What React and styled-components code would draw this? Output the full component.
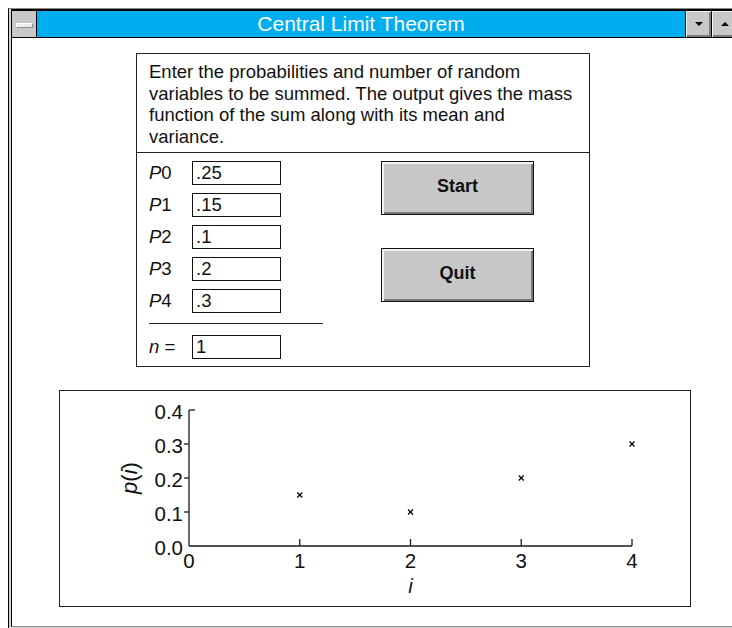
import React from "react";
import styled, { createGlobalStyle } from "styled-components";

const GlobalStyle = createGlobalStyle`
  html, body {
    margin: 0;
    padding: 0;
    background: #fff;
    overflow: hidden;
  }
  body {
    font-family: "Liberation Sans", Arial, sans-serif;
    color: #111;
  }
`;

const probs = [".25", ".15", ".1", ".2", ".3"];
const points = [[1, 0.15], [2, 0.1], [3, 0.2], [4, 0.3]];

// chart geometry (svg coords)
const X0 = 129;
const Y0 = 155;
const XS = 110.75;
const YS = 340;
const px = (i) => X0 + i * XS;
const py = (p) => Y0 - p * YS;

const App = () => {
  return (
    <Page>
      <GlobalStyle />
      <Frame>
        <Inner>
          <TitleBar>
            <SysMenu>
              <SysBar />
            </SysMenu>
            <Caption>Central Limit Theorem</Caption>
            <ArrowBtn>
              <Arrow down />
            </ArrowBtn>
            <ArrowBtn>
              <Arrow />
            </ArrowBtn>
          </TitleBar>

          <Panel>
            <Description>
              Enter the probabilities and number of random
              <br />
              variables to be summed. The output gives the mass
              <br />
              function of the sum along with its mean and
              <br />
              variance.
            </Description>

            <Lower>
              <Fields>
                {probs.map((v, i) => (
                  <Row key={i}>
                    <Label>
                      <em>P</em>
                      {i}
                    </Label>
                    <Field>{v}</Field>
                  </Row>
                ))}
                <Divider />
                <Row>
                  <Label>
                    <em>n</em> =
                  </Label>
                  <Field>1</Field>
                </Row>
              </Fields>

              <Buttons>
                <Button>Start</Button>
                <Button>Quit</Button>
              </Buttons>
            </Lower>
          </Panel>

          <ChartBox>
            <svg width="630" height="215">
              <g stroke="#1a1a1a" strokeWidth="1.3" fill="none">
                <line x1={X0} y1={py(0.4)} x2={X0} y2={Y0} />
                <line x1={X0} y1={Y0} x2={px(4)} y2={Y0} />
                <line x1={X0} y1={py(0.4)} x2={X0 + 6} y2={py(0.4)} />
                {[0.1, 0.2, 0.3].map((t) => (
                  <line key={t} x1={X0 - 5} y1={py(t)} x2={X0} y2={py(t)} />
                ))}
                {[1, 2, 3, 4].map((t) => (
                  <line key={t} x1={px(t)} y1={Y0} x2={px(t)} y2={Y0 - 7} />
                ))}
              </g>

              <g fontFamily="Liberation Sans, Arial, sans-serif" fontSize="20.5" fill="#111">
                {[0, 0.1, 0.2, 0.3, 0.4].map((t) => (
                  <text key={t} x={X0 - 6} y={py(t) + 1} textAnchor="end" dominantBaseline="central">
                    {t.toFixed(1)}
                  </text>
                ))}
                {[0, 1, 2, 3, 4].map((t) => (
                  <text key={t} x={px(t)} y={177} textAnchor="middle">
                    {t}
                  </text>
                ))}
                <text x={px(2)} y={202} textAnchor="middle" fontStyle="italic">
                  i
                </text>
                <text
                  x={69}
                  y={87}
                  textAnchor="middle"
                  dominantBaseline="central"
                  transform="rotate(-90 69 87)"
                  fontSize="22"
                >
                  <tspan fontStyle="italic">p</tspan>(<tspan fontStyle="italic">i</tspan>)
                </text>
              </g>

              <g stroke="#000" strokeWidth="1.3">
                {points.map(([i, p]) => (
                  <g key={i}>
                    <line x1={px(i) - 2.5} y1={py(p) - 2.5} x2={px(i) + 2.5} y2={py(p) + 2.5} />
                    <line x1={px(i) - 2.5} y1={py(p) + 2.5} x2={px(i) + 2.5} y2={py(p) - 2.5} />
                  </g>
                ))}
              </g>
            </svg>
          </ChartBox>
        </Inner>
      </Frame>
    </Page>
  );
};

const Page = styled.div`
  width: 732px;
  height: 628px;
  padding: 8px 0 0 8px;
  box-sizing: border-box;
  overflow: hidden;
`;

const Frame = styled.div`
  width: 729px;
  height: 620px;
  box-sizing: border-box;
  border-top: 1px solid #8a8a8a;
  border-left: 1px solid #000;
  padding-left: 2px;
  background: #d4d4d4;
`;

const Inner = styled.div`
  height: 618px;
  box-sizing: border-box;
  background: #fff;
  border-left: 1px solid #000;
  border-top: 2px solid #000;
  border-bottom: 1px solid #8a8a8a;
  display: flex;
  flex-direction: column;
`;

const TitleBar = styled.div`
  display: flex;
  height: 27px;
  box-sizing: border-box;
  border-bottom: 1px solid #000;
`;

const SysMenu = styled.div`
  width: 25px;
  box-sizing: border-box;
  border-right: 1px solid #000;
  background: #c8c8c8;
  display: flex;
  align-items: center;
  justify-content: center;
`;

const SysBar = styled.span`
  width: 17px;
  height: 5px;
  box-sizing: border-box;
  background: #ececec;
  border: 1px solid #8c8c8c;
  border-top-color: #fff;
  border-left-color: #fff;
  margin-top: 2px;
`;

const Caption = styled.div`
  flex: 1;
  background: #00adef;
  color: #fff;
  font-size: 21px;
  line-height: 26px;
  text-align: center;
`;

const ArrowBtn = styled.div`
  width: 26px;
  box-sizing: border-box;
  background: #c8c8c8;
  border-left: 1px solid #000;
  box-shadow: inset 1px 1px 0 #f2f2f2, inset -2px -2px 0 #7c7c7c;
  display: flex;
  align-items: center;
  justify-content: center;
`;

const Arrow = styled.span`
  width: 0;
  height: 0;
  border-left: 4px solid transparent;
  border-right: 4px solid transparent;
  ${(p) => (p.down ? "border-top: 4px solid #000;" : "border-bottom: 4px solid #000;")}
`;

const Panel = styled.div`
  margin: 15px 0 0 124px;
  width: 454px;
  height: 314px;
  box-sizing: border-box;
  border: 1px solid #222;
`;

const Description = styled.div`
  padding: 7px 12px 5px;
  font-size: 18.5px;
  line-height: 21.5px;
  white-space: nowrap;
  border-bottom: 1px solid #222;
`;

const Lower = styled.div`
  display: flex;
  gap: 58px;
  padding: 8px 12px 0;
`;

const Fields = styled.div`
  width: 174px;
  display: flex;
  flex-direction: column;
  gap: 8px;
`;

const Row = styled.div`
  display: flex;
  align-items: center;
  height: 24px;
`;

const Label = styled.div`
  width: 43px;
  font-size: 18.5px;
`;

const Field = styled.div`
  width: 89px;
  height: 24px;
  box-sizing: border-box;
  border: 1px solid #111;
  padding-left: 3px;
  font-size: 18.5px;
  line-height: 22px;
`;

const Divider = styled.div`
  height: 1px;
  background: #222;
  margin: 2px 0 3px;
`;

const Buttons = styled.div`
  display: flex;
  flex-direction: column;
  gap: 33px;
`;

const Button = styled.div`
  width: 153px;
  height: 54px;
  box-sizing: border-box;
  background: #c8c8c8;
  border: 1px solid #111;
  box-shadow: inset 2px 2px 0 #f4f4f4, inset -2px -2px 0 #7a7a7a;
  display: flex;
  align-items: center;
  justify-content: center;
  font-size: 18px;
  font-weight: bold;
  color: #111;
  padding-bottom: 3px;
`;

const ChartBox = styled.div`
  margin: 23px 0 0 47px;
  width: 632px;
  height: 217px;
  box-sizing: border-box;
  border: 1px solid #222;
`;

export default App;
